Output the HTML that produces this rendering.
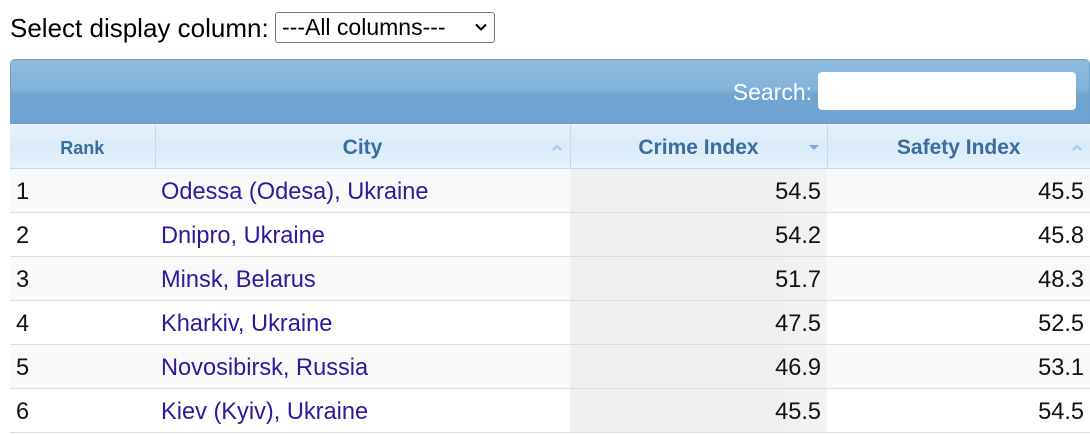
<!DOCTYPE html>
<html><head><style>
body{margin:0;background:#fff;font-family:"Liberation Sans",Arial,sans-serif;width:1090px;height:435px;overflow:hidden;position:relative}
.sel{position:absolute;left:10px;top:14px;font-size:26px;color:#000;line-height:28px}
.sel span.box{position:absolute;left:265px;top:-2px;width:220px;height:31px;border:1px solid #767676;border-radius:3px;box-sizing:border-box;font-size:23px;padding-left:6px;line-height:28px;white-space:nowrap}
.sel svg{position:absolute;right:7px;top:10px}
.bar{position:absolute;left:10px;top:59px;width:1080px;height:65px;border-radius:5px 5px 0 0;background:linear-gradient(#8fbbdd,#84b3da 45%,#6ea4cf 55%,#6ea4cf);box-sizing:border-box;border:1px solid #6a9fcb}
.bar .s{position:absolute;right:277px;top:19px;color:#fff;font-size:23px}
.bar .in{position:absolute;left:807px;top:12px;width:258px;height:38px;background:#fff;border-radius:4px}
table{position:absolute;left:10px;top:124px;width:1080px;border-collapse:collapse}
th{height:41px;line-height:20px;background:linear-gradient(#e6f2fc,#d9ebf9 50%,#e7f2fc);color:#3a6c9c;font-weight:bold;font-size:21px;border-left:1px solid #c5d9ea;border-bottom:1px solid #c5d9ea;position:relative;padding:3px 0 0}
th:first-child{border-left:none;font-size:18px}
th svg{position:absolute;right:7px;top:20px}
td{height:41px;line-height:24px;border-bottom:1px solid #ddd;font-size:23.6px;padding:2px 6px 0;color:#111}
tr:nth-child(odd) td{background:#f9f9f9}
tr:nth-child(even) td{background:#fff}
td.c{background:linear-gradient(90deg,#f0f0f0,#f0f0f0 80%,#f3f3f3)!important;text-align:right}
td.r{text-align:right}
a{color:#2a1a9c;text-decoration:none}
</style></head><body>
<div class="sel">Select display column: <span class="box">---All columns---<svg width="12" height="8" viewBox="0 0 12 8"><path d="M1 1.5L6 6.5L11 1.5" fill="none" stroke="#000" stroke-width="2"/></svg></span></div>
<div class="bar"><span class="s">Search:</span><div class="in"></div></div>
<table>
<colgroup><col style="width:145px"><col style="width:415px"><col style="width:257px"><col style="width:263px"></colgroup>
<thead><tr><th>Rank</th>
<th>City<svg width="12" height="7" viewBox="0 0 12 7"><path d="M2 6L6 2L10 6" fill="none" stroke="#a9c6e0" stroke-width="2"/></svg></th>
<th>Crime Index<svg width="12" height="7" viewBox="0 0 12 7"><path d="M1 1H11L6 6Z" fill="#7fa9cf"/></svg></th>
<th>Safety Index<svg width="12" height="7" viewBox="0 0 12 7"><path d="M2 6L6 2L10 6" fill="none" stroke="#a9c6e0" stroke-width="2"/></svg></th></tr></thead>
<tbody>
<tr><td>1</td><td><a>Odessa (Odesa), Ukraine</a></td><td class="c">54.5</td><td class="r">45.5</td></tr>
<tr><td>2</td><td><a>Dnipro, Ukraine</a></td><td class="c">54.2</td><td class="r">45.8</td></tr>
<tr><td>3</td><td><a>Minsk, Belarus</a></td><td class="c">51.7</td><td class="r">48.3</td></tr>
<tr><td>4</td><td><a>Kharkiv, Ukraine</a></td><td class="c">47.5</td><td class="r">52.5</td></tr>
<tr><td>5</td><td><a>Novosibirsk, Russia</a></td><td class="c">46.9</td><td class="r">53.1</td></tr>
<tr><td>6</td><td><a>Kiev (Kyiv), Ukraine</a></td><td class="c">45.5</td><td class="r">54.5</td></tr>
</tbody></table>
</body></html>
